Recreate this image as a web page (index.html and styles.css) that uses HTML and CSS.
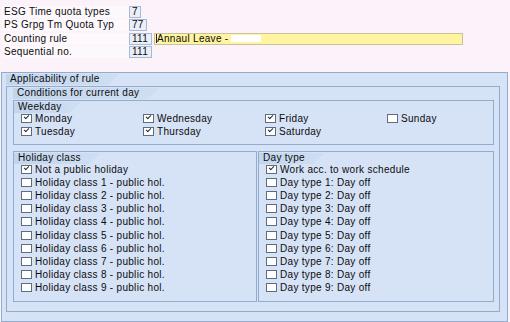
FILE: index.html
```html
<!DOCTYPE html>
<html lang="en">
<head>
    <meta charset="UTF-8">
    <title>Counting rule</title>
    <link rel="stylesheet" href="styles.css">
</head>
<body>
    <div class="header">
        <div class="field-row">
            <span class="label">ESG Time quota types</span>
            <span class="value w1">7</span>
        </div>
        <div class="field-row">
            <span class="label">PS Grpg Tm Quota Typ</span>
            <span class="value w2">77</span>
        </div>
        <div class="field-row">
            <span class="label">Counting rule</span>
            <span class="value w3">111</span>
            <span class="text-field"><span class="cursor"></span>Annaul Leave -<span class="blank"></span></span>
        </div>
        <div class="field-row">
            <span class="label">Sequential no.</span>
            <span class="value w3">111</span>
        </div>
    </div>

    <div class="group outer">
        <div class="tab"><span>Applicability of rule</span></div>
        <div class="group middle">
            <div class="tab"><span>Conditions for current day</span></div>

            <div class="group weekday">
                <div class="tab"><span>Weekday</span></div>
                <div class="week-grid">
                    <label class="check"><span class="box on"></span>Monday</label>
                    <label class="check"><span class="box on"></span>Wednesday</label>
                    <label class="check"><span class="box on"></span>Friday</label>
                    <label class="check"><span class="box"></span>Sunday</label>
                    <label class="check"><span class="box on"></span>Tuesday</label>
                    <label class="check"><span class="box on"></span>Thursday</label>
                    <label class="check"><span class="box on"></span>Saturday</label>
                </div>
            </div>

            <div class="columns">
                <div class="group holiday">
                    <div class="tab"><span>Holiday class</span></div>
                    <div class="list">
                        <label class="check"><span class="box on"></span>Not a public holiday</label>
                        <label class="check"><span class="box"></span>Holiday class 1 - public hol.</label>
                        <label class="check"><span class="box"></span>Holiday class 2 - public hol.</label>
                        <label class="check"><span class="box"></span>Holiday class 3 - public hol.</label>
                        <label class="check"><span class="box"></span>Holiday class 4 - public hol.</label>
                        <label class="check"><span class="box"></span>Holiday class 5 - public hol.</label>
                        <label class="check"><span class="box"></span>Holiday class 6 - public hol.</label>
                        <label class="check"><span class="box"></span>Holiday class 7 - public hol.</label>
                        <label class="check"><span class="box"></span>Holiday class 8 - public hol.</label>
                        <label class="check"><span class="box"></span>Holiday class 9 - public hol.</label>
                    </div>
                </div>
                <div class="group daytype">
                    <div class="tab"><span>Day type</span></div>
                    <div class="list">
                        <label class="check"><span class="box on"></span>Work acc. to work schedule</label>
                        <label class="check"><span class="box"></span>Day type 1: Day off</label>
                        <label class="check"><span class="box"></span>Day type 2: Day off</label>
                        <label class="check"><span class="box"></span>Day type 3: Day off</label>
                        <label class="check"><span class="box"></span>Day type 4: Day off</label>
                        <label class="check"><span class="box"></span>Day type 5: Day off</label>
                        <label class="check"><span class="box"></span>Day type 6: Day off</label>
                        <label class="check"><span class="box"></span>Day type 7: Day off</label>
                        <label class="check"><span class="box"></span>Day type 8: Day off</label>
                        <label class="check"><span class="box"></span>Day type 9: Day off</label>
                    </div>
                </div>
            </div>
        </div>
    </div>
</body>
</html>
```

FILE: styles.css
```css
* {
    margin: 0;
    padding: 0;
    box-sizing: border-box;
}
body {
    width: 510px;
    height: 322px;
    overflow: hidden;
    background: #fcf3fa;
    font-family: "Liberation Sans", Arial, sans-serif;
    font-size: 10px;
    letter-spacing: 0.3px;
    color: #0c0c0c;
}
.header {
    padding: 5px 0 0 2px;
    height: 72px;
}
.field-row {
    display: flex;
    align-items: center;
    height: 13px;
}
.field-row:nth-child(3) {
    margin-top: 1px;
}
.label {
    width: 127px;
    height: 12px;
    line-height: 12px;
    padding-left: 2px;
    background: #fdf8fc;
}
.value {
    height: 12px;
    line-height: 10px;
    padding-left: 2px;
    border: 1px solid #a9b9d2;
    background: #e9eef8;
}
.w1 { width: 12px; }
.w2 { width: 18px; }
.w3 { width: 23px; }
.text-field {
    display: flex;
    align-items: center;
    margin-left: 2px;
    width: 309px;
    height: 12px;
    line-height: 10px;
    border: 1px solid #c9c19b;
    background: #fff4a0;
}
.cursor {
    width: 1px;
    height: 9px;
    margin: 0 0 0 1px;
    background: #202040;
}
.blank {
    width: 30px;
    height: 7px;
    margin-left: 3px;
    background: #ffffff;
}
.group {
    border: 1px solid #93acce;
    background: #d6e2f6;
}
.tab {
    height: 12px;
}
.tab span {
    display: inline-block;
    height: 11px;
    line-height: 10px;
    padding: 0 20px 0 4px;
    background: linear-gradient(to right, #c3d5ec, #cfdff2);
    clip-path: polygon(0 0, 100% 0, calc(100% - 12px) 100%, 0 100%);
}
.outer {
    margin-left: 1px;
    width: 507px;
    height: 250px;
    padding: 0 7px 0 4px;
}
.middle {
    margin-top: 1px;
    padding: 0 5px 9px 6px;
}
.weekday {
    margin-top: 1px;
    padding-bottom: 6px;
}
.week-grid {
    display: grid;
    grid-template-columns: repeat(4, 122px);
    margin-top: -1px;
    padding-left: 7px;
}
.check {
    display: flex;
    align-items: center;
    height: 13px;
    white-space: nowrap;
}
.list .check {
    height: 13.1px;
}
.box {
    width: 11px;
    height: 9px;
    margin-right: 3px;
    border: 1px solid #5f6b7e;
    background: #ffffff;
    position: relative;
}
.box.on::after {
    content: "";
    position: absolute;
    left: 2px;
    top: 0px;
    width: 4px;
    height: 2px;
    border-left: 1.5px solid #2a2a3a;
    border-bottom: 1.5px solid #2a2a3a;
    transform: rotate(-45deg);
}
.columns {
    display: flex;
    gap: 1px;
    margin-top: 6px;
}
.holiday {
    width: 244px;
}
.daytype {
    flex: 1;
}
.list {
    margin-top: -1px;
    padding: 0 0 7px 7px;
}
```
